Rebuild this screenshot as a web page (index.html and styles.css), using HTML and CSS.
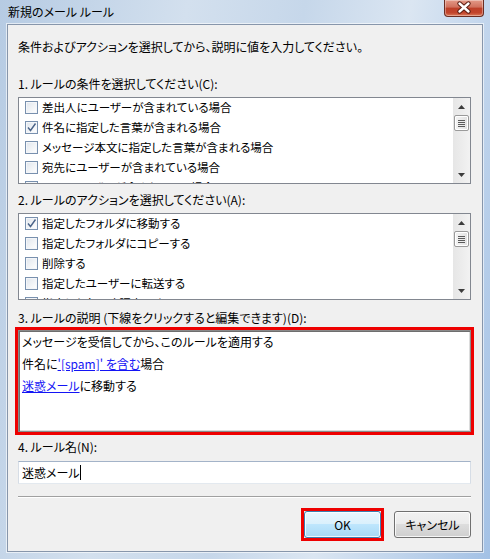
FILE: index.html
```html
<!DOCTYPE html>
<html lang="ja">
<head>
    <meta charset="UTF-8">
    <meta name="viewport" content="width=device-width, initial-scale=1.0">
    <title>新規のメール ルール</title>
    <link rel="stylesheet" href="styles.css">
</head>
<body>
    <div class="window">
        <div class="titlebar">
            <span class="title">新規のメール ルール</span>
            <div class="close">
                <svg width="40" height="17" viewBox="0 0 40 17">
                    <path d="M15.5 4.5 L24.5 12.5 M24.5 4.5 L15.5 12.5" stroke="#5a1d12" stroke-width="4.4" stroke-linecap="round" fill="none"/>
                    <path d="M15.5 4.5 L24.5 12.5 M24.5 4.5 L15.5 12.5" stroke="#ffffff" stroke-width="2.4" stroke-linecap="round" fill="none"/>
                </svg>
            </div>
        </div>

        <div class="client">
            <p class="intro">条件およびアクションを選択してから、説明に値を入力してください。</p>

            <div class="label">1. ルールの条件を選択してください(C):</div>
            <div class="listbox">
                <ul class="items">
                    <li><span class="check"></span>差出人にユーザーが含まれている場合</li>
                    <li><span class="check"><svg width="11" height="11" viewBox="0 0 11 11"><path d="M2 5.5 L4.5 8.5 L9.5 1.5" stroke="#4a6388" stroke-width="1.4" fill="none"/></svg></span>件名に指定した言葉が含まれる場合</li>
                    <li><span class="check"></span>メッセージ本文に指定した言葉が含まれる場合</li>
                    <li><span class="check"></span>宛先にユーザーが含まれている場合</li>
                    <li><span class="check"></span>CC にユーザーが含まれている場合</li>
                </ul>
                <div class="scrollbar">
                    <div class="arrow"><svg width="7" height="4" viewBox="0 0 7 4"><path d="M0 4 L3.5 0 L7 4 Z" fill="#3c3c3c"/></svg></div>
                    <div class="thumb"><span></span><span></span><span></span><span></span></div>
                    <div class="track"></div>
                    <div class="arrow"><svg width="7" height="4" viewBox="0 0 7 4"><path d="M0 0 L3.5 4 L7 0 Z" fill="#3c3c3c"/></svg></div>
                </div>
            </div>

            <div class="label second">2. ルールのアクションを選択してください(A):</div>
            <div class="listbox">
                <ul class="items">
                    <li><span class="check"><svg width="11" height="11" viewBox="0 0 11 11"><path d="M2 5.5 L4.5 8.5 L9.5 1.5" stroke="#4a6388" stroke-width="1.4" fill="none"/></svg></span>指定したフォルダに移動する</li>
                    <li><span class="check"></span>指定したフォルダにコピーする</li>
                    <li><span class="check"></span>削除する</li>
                    <li><span class="check"></span>指定したユーザーに転送する</li>
                    <li><span class="check"></span>指定した色で強調表示する</li>
                </ul>
                <div class="scrollbar">
                    <div class="arrow"><svg width="7" height="4" viewBox="0 0 7 4"><path d="M0 4 L3.5 0 L7 4 Z" fill="#3c3c3c"/></svg></div>
                    <div class="thumb"><span></span><span></span><span></span><span></span></div>
                    <div class="track"></div>
                    <div class="arrow"><svg width="7" height="4" viewBox="0 0 7 4"><path d="M0 0 L3.5 4 L7 0 Z" fill="#3c3c3c"/></svg></div>
                </div>
            </div>

            <div class="label third">3. ルールの説明 (下線をクリックすると編集できます)(D):</div>
            <div class="highlight desc-wrap">
                <div class="desc">
                    <div>メッセージを受信してから、このルールを適用する</div>
                    <div>件名に<a href="#">'[spam]' を含む</a>場合</div>
                    <div><a href="#">迷惑メール</a>に移動する</div>
                </div>
            </div>

            <div class="label fourth">4. ルール名(N):</div>
            <div class="textbox">迷惑メール<span class="caret"></span></div>

            <div class="separator"></div>

            <div class="buttons">
                <div class="highlight">
                    <div class="btn default">OK</div>
                </div>
                <div class="btn">キャンセル</div>
            </div>
        </div>
    </div>
</body>
</html>
```

FILE: styles.css
```css
* {
    box-sizing: border-box;
}
body {
    margin: 0;
    font-family: "Noto Sans CJK JP", sans-serif;
    font-size: 12px;
    color: #000;
    font-feature-settings: "palt";
}
.window {
    width: 490px;
    height: 559px;
    padding: 0 7px 7px 7px;
    display: flex;
    flex-direction: column;
    background: linear-gradient(100deg, #b6cbe3 0%, #d3e0ee 32%, #c6d7ea 52%, #dbe6f2 70%, #a3c1e5 100%);
}
.titlebar {
    height: 24px;
    display: flex;
    align-items: flex-start;
}
.title {
    margin-top: 4px;
    margin-left: 1px;
    line-height: 16px;
}
.close {
    margin-left: auto;
    margin-right: -1px;
    width: 40px;
    height: 17px;
    border: 1px solid #6b2d22;
    border-top: none;
    border-radius: 0 0 4px 4px;
    background: linear-gradient(#e39a88 0%, #d0705c 45%, #bd3f28 50%, #c2452c 80%, #dc7b5a 100%);
    box-shadow: inset 0 0 0 1px rgba(255, 255, 255, 0.35);
}
.close svg {
    display: block;
    margin: -1px 0 0 -1px;
}
.client {
    flex: 1;
    background: #f0f0f0;
    border: 1px solid #8796ab;
    box-shadow: 0 0 0 1px rgba(255, 255, 255, 0.6);
    padding: 14px 11px 0 10px;
}
.intro {
    margin: 0;
    line-height: 16px;
}
.label {
    line-height: 16px;
    margin-top: 21px;
}
.label.second {
    margin-top: 8px;
}
.label.third {
    margin-top: 10px;
}
.label.fourth {
    margin-top: 4px;
}
.listbox {
    margin-top: 5px;
    height: 87px;
    border: 1px solid #828790;
    background: #fff;
    display: flex;
    overflow: hidden;
}
.items {
    flex: 1;
    list-style: none;
    margin: -1px 0 0 0;
    padding: 0;
    font-size: 11.5px;
}
.items li {
    height: 20px;
    display: flex;
    align-items: center;
    padding-left: 6px;
    white-space: nowrap;
}
.check {
    width: 13px;
    height: 13px;
    margin-right: 4px;
    border: 1px solid #7890ae;
    background: linear-gradient(135deg, #dfe5ec, #ffffff);
    box-shadow: inset 0 0 0 1px #f4f6f9;
    display: flex;
    align-items: center;
    justify-content: center;
}
.scrollbar {
    width: 17px;
    display: flex;
    flex-direction: column;
    background: linear-gradient(90deg, #e6e6e6, #f2f2f2);
}
.arrow {
    height: 17px;
    display: flex;
    align-items: center;
    justify-content: center;
}
.thumb {
    height: 16px;
    margin: 0 1px;
    border: 1px solid #9a9a9a;
    border-radius: 2px;
    background: linear-gradient(90deg, #f4f4f4, #e2e2e2);
    box-shadow: inset 0 0 0 1px #fff;
    display: flex;
    flex-direction: column;
    align-items: center;
    justify-content: center;
    gap: 1px;
}
.thumb span {
    width: 7px;
    height: 1px;
    background: #5a5a5a;
}
.track {
    flex: 1;
}
.highlight {
    border: 3px solid #ee0000;
}
.desc-wrap {
    margin: 1px -3px 0 -3px;
    height: 108px;
}
.desc {
    height: 100%;
    background: #fff;
    border: 1px solid #8a8a8a;
    box-shadow: inset 1px 1px 0 #6e6e6e, inset -1px -1px 0 #dcdcdc;
    padding-left: 3px;
}
.desc div {
    line-height: 22px;
}
.desc a {
    color: #1414f5;
    text-decoration: underline;
}
.textbox {
    margin-top: 6px;
    height: 23px;
    border: 1px solid;
    border-color: #a3b3c8 #d6dde6 #e3e9ef #d6dde6;
    background: #fff;
    padding-left: 3px;
    line-height: 21px;
    display: flex;
    align-items: center;
}
.caret {
    width: 1px;
    height: 15px;
    background: #000;
}
.separator {
    margin-top: 12px;
    height: 1px;
    background: #a0a0a0;
    box-shadow: 0 1px 0 #fff;
}
.buttons {
    margin-top: 11px;
    display: flex;
    justify-content: flex-end;
    align-items: center;
    gap: 10px;
}
.btn {
    width: 77px;
    height: 27px;
    border: 1px solid #707070;
    border-radius: 3px;
    background: linear-gradient(#f2f2f2 0%, #ebebeb 50%, #dddddd 50%, #cfcfcf 100%);
    box-shadow: inset 0 0 0 1px rgba(255, 255, 255, 0.8);
    display: flex;
    align-items: center;
    justify-content: center;
}
.btn.default {
    border-color: #3c7fb1;
    background: linear-gradient(#eaf6fd 0%, #d9f0fc 50%, #bee6fd 50%, #a7d9f5 100%);
}
```
